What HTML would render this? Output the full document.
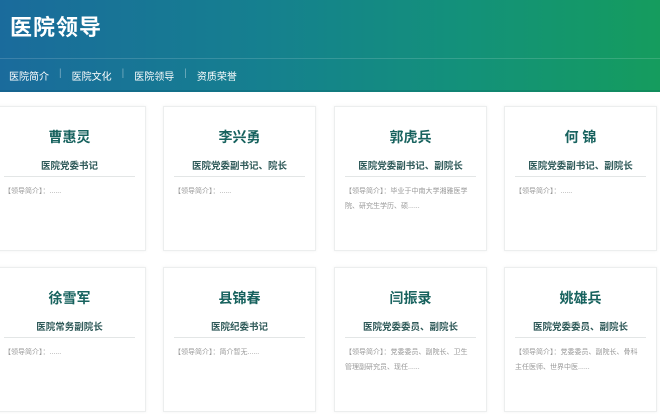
<!DOCTYPE html>
<html><head><meta charset="utf-8"><style>
*{margin:0;padding:0;box-sizing:border-box}
body{width:660px;height:414px;overflow:hidden;background:#fff;font-family:"Liberation Sans","Noto Sans CJK SC",sans-serif;position:relative}
.hd{position:absolute;left:0;top:0;width:660px;height:92px;background:linear-gradient(90deg,#1a6b9c 0%,#15808f 40%,#13917a 70%,#159c5e 100%)}
.hd h1{position:absolute;left:10px;top:10px;color:#fff;font-size:22px;font-weight:bold;letter-spacing:1px}
.hd .ln{position:absolute;left:0;top:58px;width:660px;height:1px;background:rgba(255,255,255,.15)}
.nav{position:absolute;left:9px;top:68px;color:#fff;font-size:10px;display:flex}
.nav i{font-style:normal;color:rgba(255,255,255,.4);margin:0 10px}
.hd .bot{position:absolute;left:0;top:90px;width:660px;height:2px;background:rgba(0,60,80,.15)}
.c{position:absolute;width:153px;height:145px;background:#fff;border:1px solid #eceeee;box-shadow:0 0 3px rgba(0,0,0,.06)}
.c .n{position:absolute;top:20px;width:100%;text-align:center;font-size:14px;font-weight:bold;color:#17625e}
.c .t{position:absolute;top:51px;width:100%;text-align:center;font-size:9.5px;font-weight:bold;color:#2f5a59}
.c .d{position:absolute;top:69px;left:10px;right:10px;height:1px;background:#e3e6e6}
.c .p{position:absolute;top:77px;left:10px;right:12px;font-size:7px;line-height:15px;color:#999}
</style></head><body>
<div class="hd"><h1>医院领导</h1><div class="ln"></div>
<div class="nav"><span>医院简介</span><i>|</i><span>医院文化</span><i>|</i><span>医院领导</span><i>|</i><span>资质荣誉</span></div>
<div class="bot"></div></div>

<div class="c" style="left:-7px;top:106px"><div class="n">曹惠灵</div><div class="t">医院党委书记</div><div class="d"></div><div class="p">【领导简介】：......</div></div>
<div class="c" style="left:163px;top:106px"><div class="n">李兴勇</div><div class="t">医院党委副书记、院长</div><div class="d"></div><div class="p">【领导简介】：......</div></div>
<div class="c" style="left:334px;top:106px"><div class="n">郭虎兵</div><div class="t">医院党委副书记、副院长</div><div class="d"></div><div class="p">【领导简介】：毕业于中南大学湘雅医学院、研究生学历、硕......</div></div>
<div class="c" style="left:504px;top:106px"><div class="n">何 锦</div><div class="t">医院党委副书记、副院长</div><div class="d"></div><div class="p">【领导简介】：......</div></div>

<div class="c" style="left:-7px;top:267px"><div class="n">徐雪军</div><div class="t">医院常务副院长</div><div class="d"></div><div class="p">【领导简介】：......</div></div>
<div class="c" style="left:163px;top:267px"><div class="n">县锦春</div><div class="t">医院纪委书记</div><div class="d"></div><div class="p">【领导简介】：简介暂无......</div></div>
<div class="c" style="left:334px;top:267px"><div class="n">闫振录</div><div class="t">医院党委委员、副院长</div><div class="d"></div><div class="p">【领导简介】：党委委员、副院长、卫生管理副研究员、现任......</div></div>
<div class="c" style="left:504px;top:267px"><div class="n">姚雄兵</div><div class="t">医院党委委员、副院长</div><div class="d"></div><div class="p">【领导简介】：党委委员、副院长、骨科主任医师、世界中医......</div></div>
</body></html>
